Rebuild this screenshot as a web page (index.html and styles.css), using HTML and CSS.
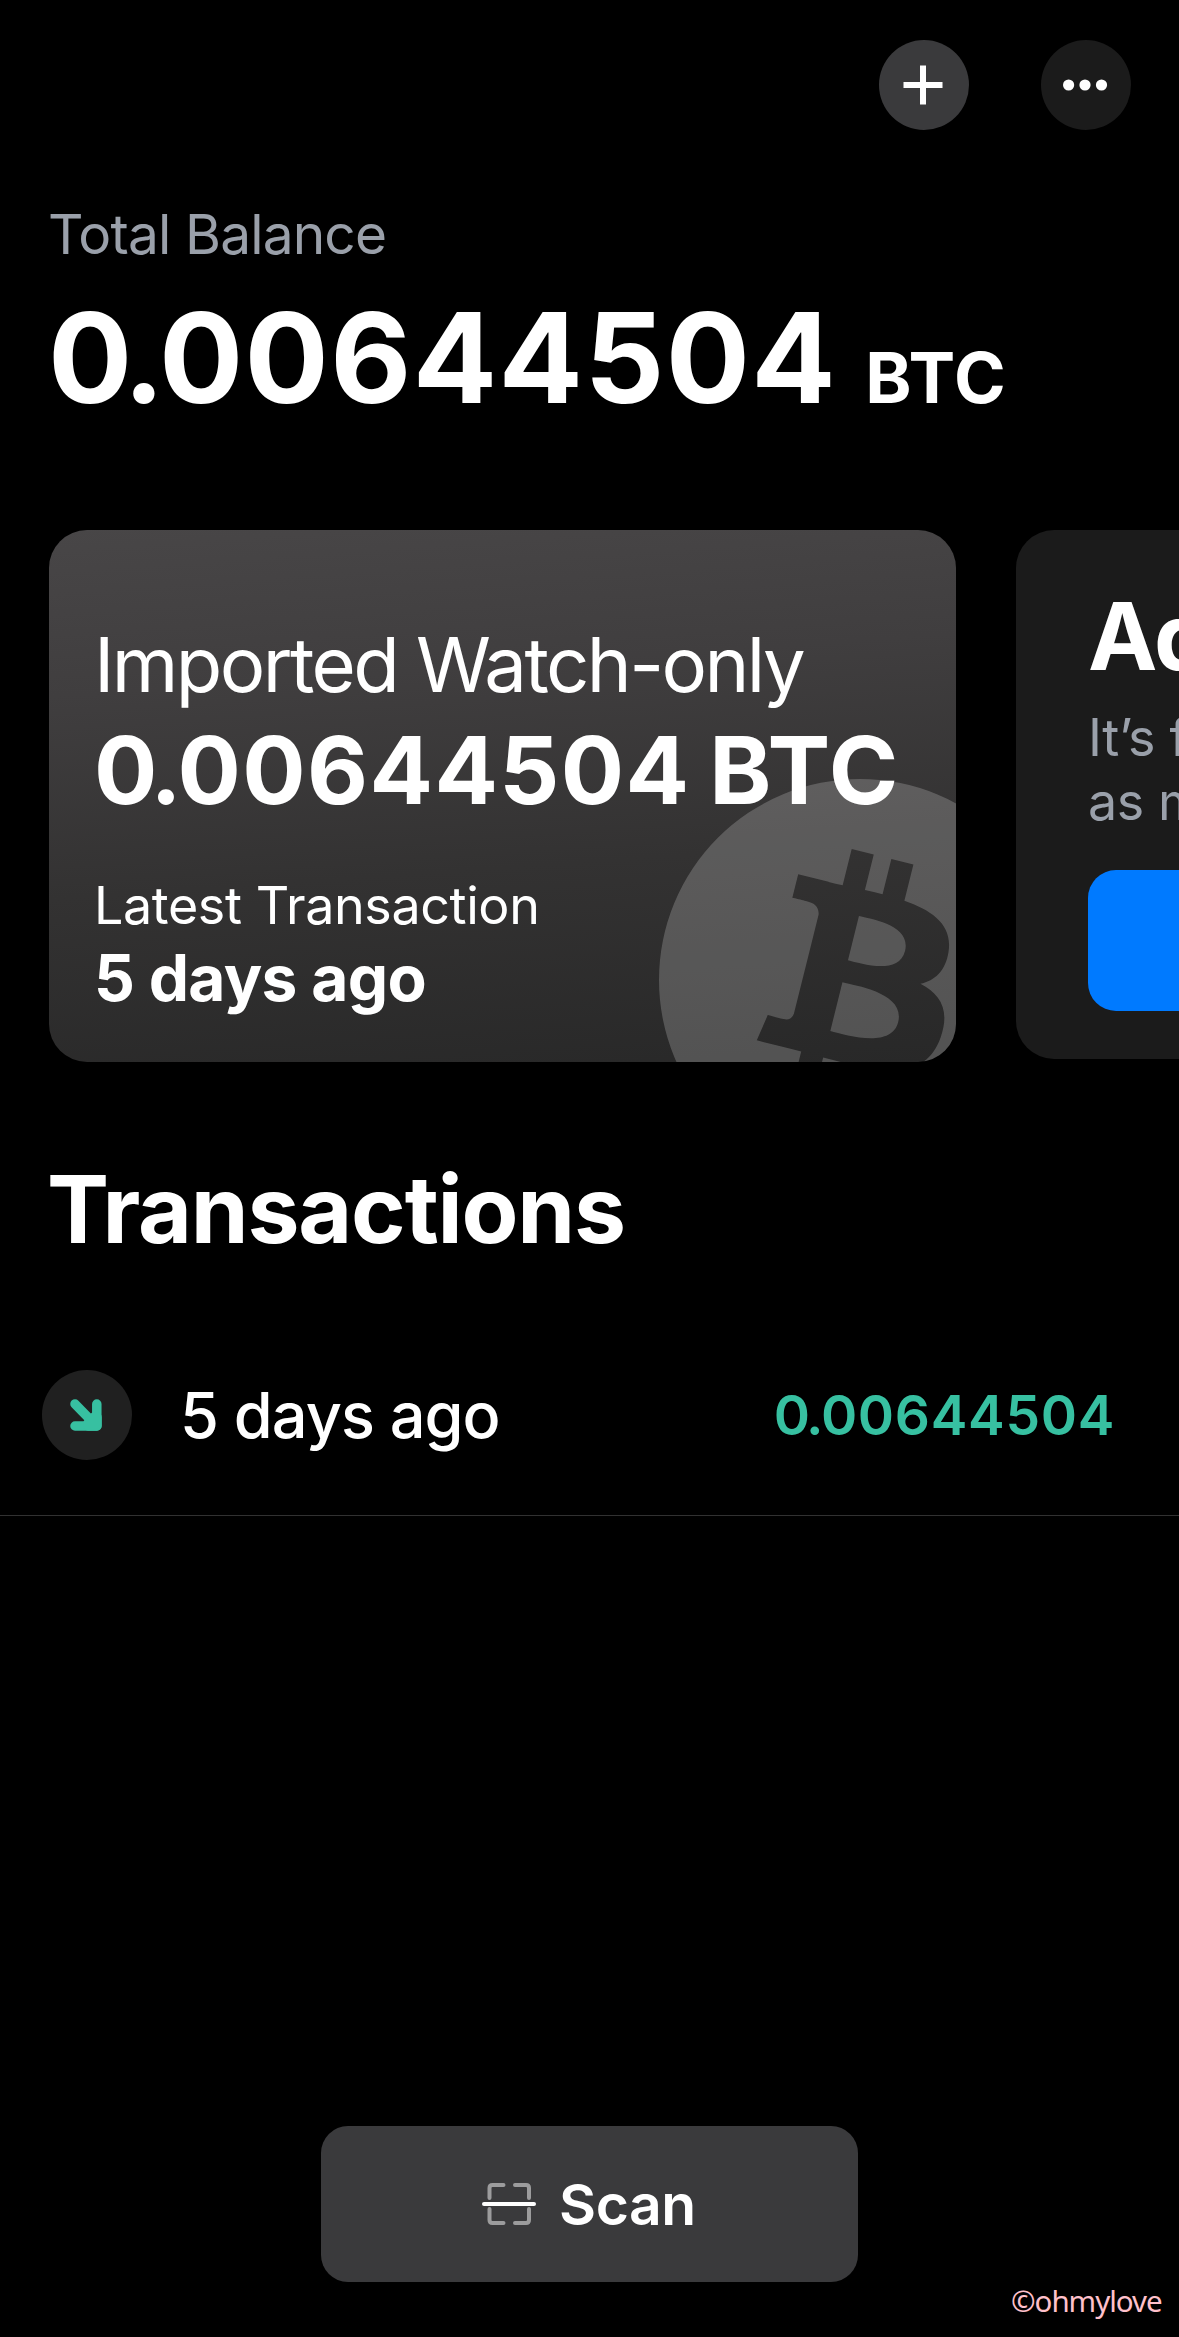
FILE: index.html
```html
<!DOCTYPE html>
<html lang="en">
<head>
<meta charset="UTF-8">
<title>Wallet</title>
<link rel="stylesheet" href="styles.css">
</head>
<body>
<header class="toolbar">
  <div class="round-btn add">
    <svg width="90" height="90" viewBox="0 0 90 90">
      <path d="M44 25.5v39M24.5 45h39" stroke="#fff" stroke-width="6"/>
    </svg>
  </div>
  <div class="round-btn more">
    <svg width="90" height="90" viewBox="0 0 90 90" fill="#fff">
      <circle cx="27.6" cy="45" r="5.6"/>
      <circle cx="44" cy="45" r="5.6"/>
      <circle cx="60.5" cy="45" r="5.6"/>
    </svg>
  </div>
</header>

<section class="balance">
  <p class="balance-label">Total Balance</p>
  <p class="balance-value"><span class="amount"><span class="int">0.</span>00644504</span><span class="unit">BTC</span></p>
</section>

<section class="cards">
  <div class="card wallet">
    <svg class="coin" viewBox="0 0 64 64">
      <path fill="#fff" fill-opacity="0.2" fill-rule="evenodd" d="M0 32a32 32 0 1 0 64 0a32 32 0 1 0 -64 0z
        M46.103 27.444c.637-4.258-2.605-6.547-7.038-8.074l1.438-5.768-3.511-.875-1.4 5.616c-.923-.23-1.871-.447-2.813-.662l1.41-5.653-3.509-.875-1.439 5.766c-.764-.174-1.514-.346-2.242-.527l.004-.018-4.842-1.209-.934 3.75s2.605.597 2.55.634c1.422.355 1.679 1.296 1.636 2.042l-1.638 6.571-2.302 9.23c-.174.432-.615 1.08-1.609.834.035.051-2.552-.637-2.552-.637l-1.743 4.019 4.569 1.139c.85.213 1.683.436 2.503.646l-1.453 5.834 3.507.875 1.439-5.772c.958.26 1.888.5 2.798.726l-1.434 5.745 3.511.875 1.453-5.823c5.987 1.133 10.489.676 12.384-4.739 1.527-4.36-.076-6.875-3.226-8.515 2.294-.529 4.022-2.038 4.483-5.155z
        m-8.022 11.249c-1.085 4.36-8.426 2.003-10.806 1.412l1.928-7.729c2.38.594 10.012 1.77 8.878 6.317z
        m1.086-11.312c-.99 3.966-7.1 1.951-9.082 1.457l1.748-7.01c1.982.494 8.365 1.416 7.334 5.553z"/>
    </svg>
    <p class="wallet-name">Imported Watch-only</p>
    <p class="wallet-balance"><span class="int">0.</span>00644504 BTC</p>
    <p class="latest-label">Latest Transaction</p>
    <p class="latest-time">5 days ago</p>
  </div>
  <div class="card new-wallet">
    <p class="new-title">Add a wallet</p>
    <p class="new-text">It’s free and you can create<br>as many as you like.</p>
    <div class="new-btn"></div>
  </div>
</section>

<section class="transactions">
  <h1>Transactions</h1>
  <div class="row">
    <div class="direction">
      <svg width="90" height="90" viewBox="0 0 90 90" fill="none" stroke="#37c0a1" stroke-width="9.5" stroke-linecap="round" stroke-linejoin="round">
        <path d="M33 34L54 55.5M54.8 34V56H33"/>
        <path d="M46 56V53L52 47H55V56z"/>
      </svg>
    </div>
    <p class="row-time">5 days ago</p>
    <p class="row-amount"><span class="int">0.</span>00644504</p>
  </div>
</section>

<footer class="bottom">
  <div class="scan">
    <svg width="54" height="44" viewBox="0 0 54 44" fill="none" stroke-width="4" stroke-linecap="round">
      <path stroke="#9c9c9d" d="M7.5 16V6q0-3 3-3h11M33 3h11q3 0 3 3v10M7.5 27v11q0 3 3 3h11M33 41h11q3 0 3-3v-11"/>
      <path stroke="#fff" d="M2 22h50"/>
    </svg>
    <span>Scan</span>
  </div>
</footer>
<div class="mark">©ohmylove</div>
</body>
</html>
```

FILE: styles.css
```css
*, *:before, *:after{
  box-sizing: border-box;
}
body{
  background: #000;
  color: #fff;
  margin: 0;
  width: 1179px;
  height: 2337px;
  overflow: hidden;
  display: flex;
  flex-direction: column;
  position: relative;
  font-family: Inter, "Liberation Sans", sans-serif;
}
p, h1{
  margin: 0;
  white-space: nowrap;
}
svg{
  display: block;
}
/* tighter around the decimal point */
.int{
  letter-spacing: -0.046em;
}

/* top buttons */
.toolbar{
  display: flex;
  justify-content: flex-end;
  gap: 72px;
  padding: 40px 48px 0 0;
}
.round-btn{
  width: 90px;
  height: 90px;
  border-radius: 50%;
}
.add{
  background: #3a3a3c;
}
.more{
  background: #1b1b1b;
}

/* total */
.balance{
  padding: 71px 0 0 48px;
}
.balance-label{
  color: #9aa0aa;
  font-size: 55px;
  line-height: 66px;
  letter-spacing: -0.85px;
}
.balance-value{
  display: flex;
  align-items: baseline;
  gap: 28px;
  margin-top: 16px;
  height: 150px;
}
.amount{
  font-size: 125px;
  line-height: 150px;
  font-weight: 700;
  letter-spacing: 1.35px;
}
.unit{
  font-size: 70px;
  font-weight: 700;
  letter-spacing: 0.97px;
}

/* wallet cards */
.cards{
  display: flex;
  align-items: flex-start;
  gap: 60px;
  margin-top: 97px;
  padding-left: 49px;
  overflow: hidden;
}
.card{
  flex: none;
  width: 907px;
  border-radius: 38px;
  overflow: hidden;
  position: relative;
}
.wallet{
  height: 532px;
  padding: 89px 0 0 45px;
  background: linear-gradient(176deg, #484647 0%, #403e3f 28%, #333232 62%, #282828 100%);
}
.wallet p{
  position: relative;
}
.coin{
  position: absolute;
  left: 610px;
  top: 249px;
  width: 402px;
  height: 402px;
}
.wallet-name{
  font-size: 76px;
  line-height: 90px;
  letter-spacing: -2.59px;
}
.wallet-balance{
  margin-top: 6px;
  font-size: 94px;
  line-height: 110px;
  font-weight: 700;
  letter-spacing: 1.4px;
  word-spacing: -5px;
}
.latest-label{
  margin-top: 49px;
  font-size: 52px;
  line-height: 64px;
  letter-spacing: -0.39px;
}
.latest-time{
  margin-top: 2px;
  font-size: 64px;
  line-height: 76px;
  font-weight: 700;
  letter-spacing: -0.68px;
}
.new-wallet{
  height: 529px;
  padding: 51px 72px 0;
  background: #1b1b1b;
}
.new-title{
  font-size: 93px;
  line-height: 110px;
  font-weight: 700;
  letter-spacing: -1.2px;
}
.new-text{
  margin-top: 15px;
  color: #9aa0aa;
  font-size: 52px;
  line-height: 64px;
  letter-spacing: -0.4px;
}
.new-btn{
  height: 141px;
  margin-top: 36px;
  border-radius: 28px;
  background: #007aff;
}

/* transactions */
.transactions h1{
  margin: 92px 0 51px 47px;
  font-size: 93px;
  line-height: 110px;
  font-weight: 700;
  letter-spacing: -1.21px;
}
.row{
  display: flex;
  align-items: center;
  height: 201px;
  padding: 0 64px 0 42px;
  border-bottom: 1px solid #313131;
}
.direction{
  width: 90px;
  height: 90px;
  border-radius: 50%;
  background: #202020;
}
.row-time{
  margin-left: 48px;
  font-size: 63px;
  font-weight: 500;
  letter-spacing: -0.96px;
}
.row-amount{
  margin-left: auto;
  color: #37c0a1;
  font-size: 55px;
  font-weight: 600;
  letter-spacing: 0.7px;
}

/* scan button */
.bottom{
  display: flex;
  justify-content: center;
  margin-top: auto;
  padding-bottom: 55px;
}
.scan{
  display: flex;
  align-items: center;
  gap: 23px;
  width: 537px;
  height: 156px;
  padding-left: 161px;
  border-radius: 27px;
  background: #3a3a3c;
  font-size: 57px;
  font-weight: 600;
  letter-spacing: -0.4px;
}
.mark{
  position: absolute;
  left: 1011px;
  top: 2281px;
  color: #ffc0cb;
  font-family: "Noto Sans", sans-serif;
  font-size: 29.5px;
  line-height: 40px;
  letter-spacing: -1px;
}
```
